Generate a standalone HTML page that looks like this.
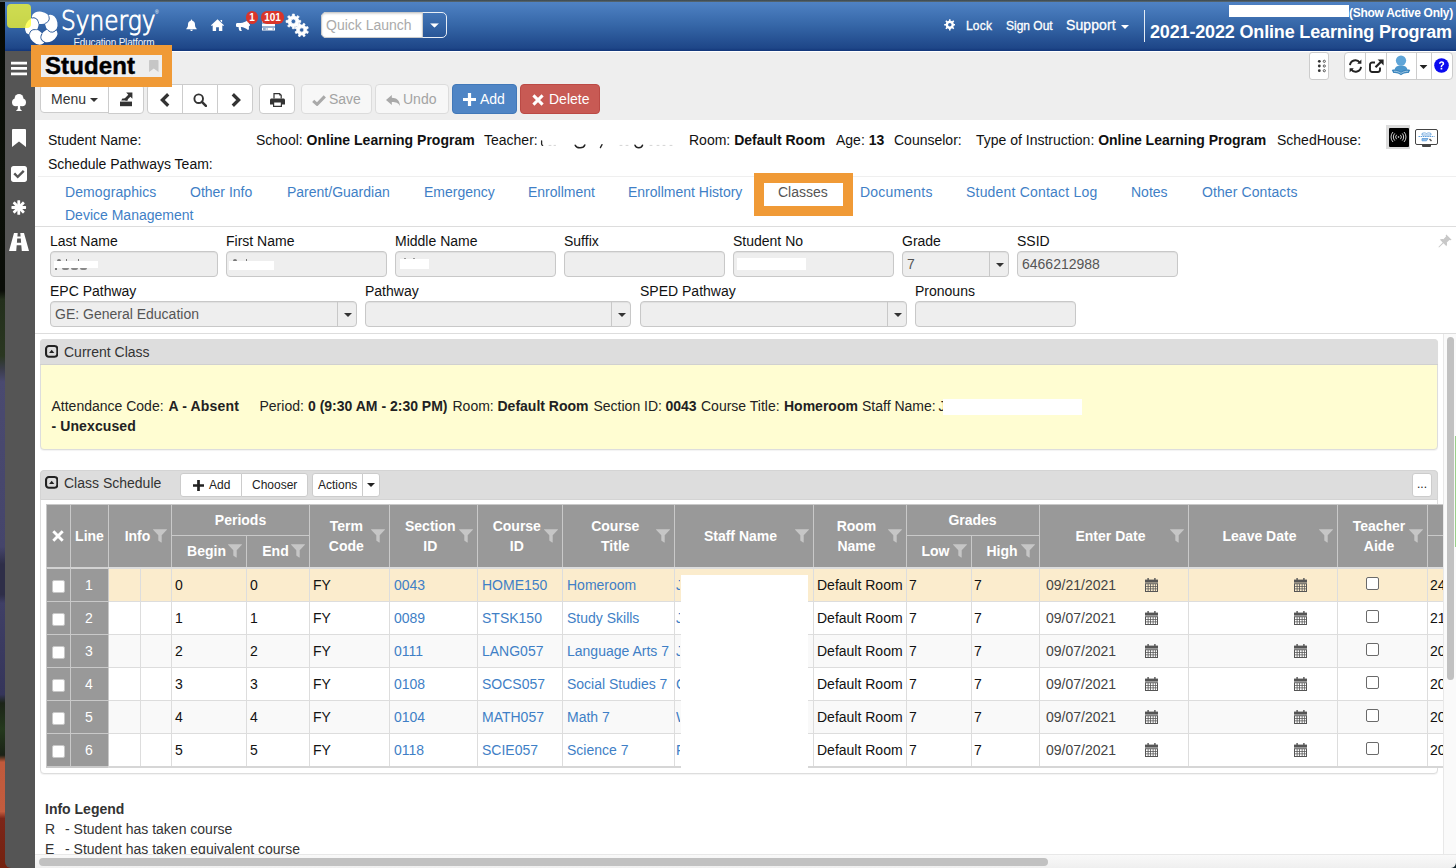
<!DOCTYPE html>
<html lang="en">
<head>
<meta charset="utf-8">
<title>Student</title>
<style>
*{box-sizing:border-box}
html,body{margin:0;padding:0}
body{width:1456px;height:868px;overflow:hidden;position:relative;background:#fff;color:#111;font:14px/20px "Liberation Sans",Arial,sans-serif}
.a{position:absolute}
.t{position:absolute;white-space:nowrap;line-height:20px}
b{font-weight:bold}
svg{display:block}
.ic{position:absolute}
/* desktop strip + chrome */
#strip{left:0;top:0;width:12px;height:868px;background:linear-gradient(180deg,#060905 0,#0b1008 20%,#0a0d08 33.500%,#232f1c 34.500%,#2a3721 41%,#3a3c4a 42.500%,#4a4a70 44%,#45456b 63%,#2e2e48 65%,#2e2e48 68.500%,#3f3f66 69.500%,#35355a 80%,#1c2418 81%,#24391d 84%,#1a2216 87%,#c05a3c 87.800%,#c25c3e 93.500%,#7c2619 94.300%,#74220f 100%)}
#topline{left:0;top:0;width:1456px;height:2px;background:linear-gradient(180deg,#39454b,#5a6a74)}
#hdr{left:5px;top:2px;width:1451px;height:49px;background:linear-gradient(180deg,#4f82c4 0,#3566a7 48%,#1e4688 94%,#12367a 100%)}
#side{left:5px;top:51px;width:30px;height:817px;background:#555;border-bottom-left-radius:6px}
#tool{left:35px;top:51px;width:1421px;height:69px;background:#eee;border-top:1px solid #fff}
/* header text */
.hw{color:#fff}
.lk{color:#3f7fc6}
.in{position:absolute;height:26px;background:#eee;border:1px solid #c8c8c8;border-radius:4px;color:#555;box-shadow:inset 0 1px 1px rgba(0,0,0,.06)}
.in span{position:absolute;left:4px;top:2px;line-height:20px;white-space:nowrap}
.in i{position:absolute;right:18px;top:0;width:1px;height:24px;background:#c8c8c8}
.th{color:#fff;font-weight:bold;text-align:center}
.dt{color:#444}
.cb{width:13px;height:13px;background:#fff;border:1px solid #6a6a6a;border-radius:2px}
/* buttons */
.btn{position:absolute;top:84px;height:30px;background:#fff;border:1px solid #ccc;border-radius:4px;font-size:14px;line-height:28px;color:#333;white-space:nowrap}
.btn .ic{margin-top:2px}
.btn.dis{color:#a3a3a3;background:#f7f7f7;border-color:#dcdcdc}
.btn.pri{background:#4f85c5;border-color:#4178b8;color:#fff}
.btn.dan{background:#c85a54;border-color:#bb4a45;color:#fff}
.sb{position:absolute;top:52px;height:28px;background:#fff;border:1px solid #ccc}
</style>
</head>
<body>
<!-- SVG icon symbols -->
<svg width="0" height="0" style="position:absolute">
<defs>
<symbol id="i-caret" viewBox="0 0 8 4"><path d="M0 0h8L4 4z"/></symbol>
</defs>
</svg>

<div id="strip" class="a"></div>
<div id="hdr" class="a"></div>
<div id="topline" class="a"></div>
<div id="side" class="a"></div>
<div id="tool" class="a"></div>

<!-- logo -->
<svg class="ic" style="left:23px;top:9px" width="38" height="38" viewBox="-19 -19 38 38">
<defs><clipPath id="lc0"><ellipse cx="0" cy="-10.300" rx="8.800" ry="6.200" transform="rotate(64) rotate(16 0 -10.300)"/></clipPath><clipPath id="lc1"><ellipse cx="0" cy="-10.300" rx="8.800" ry="6.200" transform="rotate(136) rotate(16 0 -10.300)"/></clipPath><clipPath id="lc2"><ellipse cx="0" cy="-10.300" rx="8.800" ry="6.200" transform="rotate(208) rotate(16 0 -10.300)"/></clipPath><clipPath id="lc3"><ellipse cx="0" cy="-10.300" rx="8.800" ry="6.200" transform="rotate(280) rotate(16 0 -10.300)"/></clipPath><clipPath id="lc4"><ellipse cx="0" cy="-10.300" rx="8.800" ry="6.200" transform="rotate(-8) rotate(16 0 -10.300)"/></clipPath></defs>
<g fill="#fff"><ellipse cx="0" cy="-10.300" rx="8.800" ry="6.200" transform="rotate(-8) rotate(16 0 -10.300)"/><ellipse cx="0" cy="-10.300" rx="8.800" ry="6.200" transform="rotate(64) rotate(16 0 -10.300)"/><ellipse cx="0" cy="-10.300" rx="8.800" ry="6.200" transform="rotate(136) rotate(16 0 -10.300)"/><ellipse cx="0" cy="-10.300" rx="8.800" ry="6.200" transform="rotate(208) rotate(16 0 -10.300)"/><ellipse cx="0" cy="-10.300" rx="8.800" ry="6.200" transform="rotate(280) rotate(16 0 -10.300)"/></g>
<g fill="none" stroke="#2f5c9c" stroke-width="0.9"><g clip-path="url(#lc0)"><ellipse cx="0" cy="-10.300" rx="8.800" ry="6.200" transform="rotate(-8) rotate(16 0 -10.300)"/></g><g clip-path="url(#lc1)"><ellipse cx="0" cy="-10.300" rx="8.800" ry="6.200" transform="rotate(64) rotate(16 0 -10.300)"/></g><g clip-path="url(#lc2)"><ellipse cx="0" cy="-10.300" rx="8.800" ry="6.200" transform="rotate(136) rotate(16 0 -10.300)"/></g><g clip-path="url(#lc3)"><ellipse cx="0" cy="-10.300" rx="8.800" ry="6.200" transform="rotate(208) rotate(16 0 -10.300)"/></g><g clip-path="url(#lc4)"><ellipse cx="0" cy="-10.300" rx="8.800" ry="6.200" transform="rotate(280) rotate(16 0 -10.300)"/></g></g>
</svg>
<div class="t hw" style="left:61px;top:4px;font-family:'DejaVu Sans Light','DejaVu Sans',sans-serif;font-weight:200;font-size:26px;line-height:34px;transform:scaleX(.895);transform-origin:0 0;-webkit-text-stroke:0.9px #fff">Synergy</div>
<div class="t hw" style="left:155px;top:9px;font-size:5px;line-height:6px">®</div>
<div class="t hw" style="left:73.400px;top:37.400px;font-size:10px;line-height:12px;letter-spacing:-0.2px;opacity:.92">Education Platform</div>
<div class="a" style="left:7px;top:4px;width:24px;height:24px;border-radius:4px;background:rgba(255,255,40,.73)"></div>

<!-- header icons -->
<svg class="ic" style="left:185.500px;top:18.500px" width="11" height="12.500" viewBox="0 0 12 13" fill="#fff"><path d="M6 0.3c.5 0 .8.3.8.8v.5c1.900.400 3 1.900 3 3.800 0 2.800.7 3.900 1.900 4.900v.6H.3v-.6c1.200-1 1.900-2.100 1.900-4.900 0-1.900 1.100-3.400 3-3.800V1.100c0-.5.300-.8.800-.8zM4.600 11.400h2.800c0 .8-.6 1.400-1.400 1.400s-1.400-.6-1.400-1.400z"/></svg>
<svg class="ic" style="left:211px;top:19px" width="13" height="12" viewBox="0 0 13 12" fill="#fff"><path d="M6.500.300 13 6.200l-.8.900-.9-.8V12H7.900V8.200H5.100V12H1.700V6.300l-.9.800L0 6.200zM9.500.900h1.600v2.600L9.500 2.100z"/></svg>
<svg class="ic" style="left:236px;top:20px" width="14" height="11" viewBox="0 0 14 11" fill="#fff"><path d="M12 0c.5 0 .9.400.9.900v2.900c.6.100 1.100.600 1.100 1.200s-.5 1.100-1.100 1.200v2.900c0 .5-.4.900-.9.900C9.800 8.300 7.600 7.300 5.200 7.100c-.5.400-.5.900 0 1.400-.4.700 0 1.300.7 1.900-.4.700-1.900.8-2.600.2-.3-1.300-.9-2.300-.6-3.500H1.400C.6 7.100 0 6.500 0 5.700V4.300c0-.8.600-1.400 1.400-1.400h3.100C7.300 2.800 9.800 1.700 12 0z"/></svg>
<svg class="ic" style="left:262px;top:19px" width="13" height="12" viewBox="0 0 13 12" fill="#fff"><path d="M0 .5h13v2.900H0zM0 4.500h13v2.900H0zM0 8.600h13v2.900H0z"/><path fill="#2c5a9a" d="M1 9.600h2.800v.9H1zM4.600 9.600h1v.9h-1zM10.600 9.500h1.200v1.100h-1.200z"/></svg>
<!-- badges -->
<div class="a" style="left:246px;top:11px;width:12px;height:13px;border-radius:6px;background:#d9352a;color:#fff;font-weight:bold;font-size:10px;line-height:13px;text-align:center">1</div>
<div class="a" style="left:261px;top:11px;width:23px;height:13px;border-radius:6px;background:#d9352a;color:#fff;font-weight:bold;font-size:10px;line-height:13px;text-align:center">101</div>
<!-- cogs -->
<svg class="ic" style="left:285px;top:13px" width="25" height="25" viewBox="0 0 25 25">
<g fill="#fff" stroke="#fff" stroke-width=".7" stroke-linejoin="round">
<g transform="translate(8.400 8.400)"><path id="cg" d="M-1.08 -5.39 L-0.99 -7.33 L0.99 -7.33 L1.07 -5.39 L3.05 -4.58 L4.49 -5.88 L5.88 -4.49 L4.57 -3.06 L5.39 -1.08 L7.33 -0.99 L7.33 0.99 L5.39 1.07 L4.58 3.05 L5.88 4.49 L4.49 5.88 L3.06 4.57 L1.08 5.39 L0.99 7.33 L-0.99 7.33 L-1.07 5.39 L-3.05 4.58 L-4.49 5.88 L-5.88 4.49 L-4.57 3.06 L-5.39 1.08 L-7.33 0.99 L-7.33 -0.99 L-5.39 -1.07 L-4.58 -3.05 L-5.88 -4.49 L-4.49 -5.88 L-3.06 -4.57zM0 -2.3a2.3 2.3 0 1 0 0 4.6a2.3 2.3 0 1 0 0 -4.6z" fill-rule="evenodd"/></g>
<g transform="translate(16.700 17) scale(.93) rotate(22)"><use href="#cg"/></g>
</g>
</svg>
<!-- quick launch -->
<div class="a" style="left:321px;top:12px;width:126px;height:26px;border:1px solid #e8eef6;border-radius:5px"></div>
<div class="a" style="left:321px;top:12px;width:102px;height:26px;background:#fff;border:1px solid #ccc;border-radius:5px 0 0 5px;box-shadow:inset 0 1px 2px rgba(0,0,0,.15)"></div>
<div class="t" style="left:326px;top:15px;color:#aaa">Quick Launch</div>
<svg class="ic" style="left:430px;top:23px" width="9" height="5" viewBox="0 0 8 4" fill="#fff"><use href="#i-caret"/></svg>

<!-- header right -->
<svg class="ic" style="left:943.500px;top:19.300px" width="11.600" height="11.600" viewBox="-7.600 -7.600 15.200 15.200" fill="#fff"><use href="#cg"/></svg>
<div class="t hw" style="left:966px;top:16px;font-size:12px;letter-spacing:.2px;-webkit-text-stroke:.3px #fff">Lock</div>
<div class="t hw" style="left:1006px;top:16px;font-size:12px;-webkit-text-stroke:.3px #fff">Sign Out</div>
<div class="t hw" style="left:1066px;top:15px;font-size:14px;letter-spacing:.1px;-webkit-text-stroke:.3px #fff">Support</div>
<svg class="ic" style="left:1121px;top:25px" width="8" height="4" viewBox="0 0 8 4" fill="#fff"><use href="#i-caret"/></svg>
<div class="a" style="left:1144px;top:10px;width:1px;height:32px;background:#e4ebf5"></div>
<div class="a" style="left:1229px;top:5px;width:120px;height:12px;background:#fff"></div>
<div class="t hw" style="left:1349px;top:3px;font-size:12px;font-weight:bold;letter-spacing:-0.28px">(Show Active Only)</div>
<div class="t hw" style="left:1150px;top:22px;font-size:18px;font-weight:bold;letter-spacing:-0.16px">2021-2022 Online Learning Program</div>

<!-- sidebar icons -->
<svg class="ic" style="left:11px;top:61px" width="16" height="15" viewBox="0 0 16 15" fill="#fff"><path d="M0 .8h16v2.700H0zM0 6.100h16v2.700H0zM0 11.500h16v2.700H0z"/></svg>
<svg class="ic" style="left:12px;top:93.500px" width="14" height="17.500" viewBox="0 0 14 17.500" fill="#fff"><circle cx="7" cy="4.400" r="4.400"/><circle cx="3.900" cy="8.300" r="3.900"/><circle cx="10.100" cy="8.300" r="3.900"/><circle cx="7" cy="8.500" r="3.500"/><path d="M5.800 11h2.400v3.600c0 .9.600 1.500 1.500 1.700v1.200H4.300v-1.200c.9-.2 1.500-.8 1.500-1.700z"/></svg>
<svg class="ic" style="left:12px;top:129px" width="14" height="18" viewBox="0 0 14 18" fill="#fff"><path d="M1.200 0h11.600c.7 0 1.200.5 1.200 1.200V18L7 12.400 0 18V1.200C0 .5.500 0 1.200 0z"/></svg>
<svg class="ic" style="left:11px;top:166px" width="16" height="16" viewBox="0 0 16 16" fill="#fff"><path fill-rule="evenodd" d="M2.500 0h11C14.900 0 16 1.100 16 2.500v11c0 1.400-1.100 2.500-2.500 2.500h-11C1.100 16 0 14.900 0 13.500v-11C0 1.100 1.100 0 2.500 0zM6.700 12.600l6.900-6.900-1.700-1.700-5.200 5.200-2.600-2.600-1.700 1.700z"/></svg>
<svg class="ic" style="left:11px;top:200px" width="15.500" height="15" viewBox="-8 -8 16 16" fill="#fff"><g id="ast"><rect x="-1.500" y="-7.800" width="3" height="15.600" rx=".6"/></g><use href="#ast" transform="rotate(45)"/><use href="#ast" transform="rotate(90)"/><use href="#ast" transform="rotate(135)"/></svg>
<svg class="ic" style="left:9px;top:233px" width="20" height="18" viewBox="0 0 20 18" fill="#fff"><path fill-rule="evenodd" d="M5 0h3.700l-.3 3.500h3.200L11.300 0H15l5 18h-7.200l-.5-5.800H7.700L7.200 18H0zM8.200 5.500 7.900 9.800h4.200l-.3-4.300z"/></svg>

<!-- title -->
<div class="t" style="left:45px;top:50px;font-size:24px;line-height:32px;font-weight:bold;color:#000;letter-spacing:.1px;-webkit-text-stroke:.45px #000">Student</div>
<svg class="ic" style="left:149.200px;top:60px" width="9.600" height="12" viewBox="0 0 11 14" fill="#c6c6c6"><path d="M.8 0h9.400c.5 0 .8.300.8.800V14L5.500 9.800 0 14V.8C0 .3.300 0 .8 0z"/></svg>
<!-- right small buttons -->
<div class="sb" style="left:1309px;width:20px;border-radius:3px"></div>
<svg class="ic" style="left:1316.500px;top:58.600px" width="10" height="14" viewBox="0 0 10 14"><g fill="#333"><circle cx="2.300" cy="2.300" r="1.400"/><circle cx="2.300" cy="7" r="1.400"/><circle cx="2.300" cy="11.700" r="1.400"/></g><g fill="none" stroke="#333" stroke-width=".8"><circle cx="7.300" cy="2.300" r="1.100"/><circle cx="7.300" cy="7" r="1.100"/><circle cx="7.300" cy="11.700" r="1.100"/></g></svg>
<div class="sb" style="left:1344px;width:109px;border-radius:4px"></div>
<div class="a" style="left:1365px;top:53px;width:1px;height:26px;background:#ccc"></div>
<div class="a" style="left:1386px;top:53px;width:1px;height:26px;background:#ccc"></div>
<div class="a" style="left:1415.5px;top:53px;width:1px;height:26px;background:#ccc"></div>
<div class="a" style="left:1431px;top:53px;width:1px;height:26px;background:#ccc"></div>
<svg class="ic" style="left:1348px;top:59px" width="15" height="14" viewBox="0 0 15 14" fill="none" stroke="#222" stroke-width="1.900"><path d="M2 6.200A5.400 5.400 0 0 1 11.800 3.600"/><path d="M13 7.800A5.400 5.400 0 0 1 3.200 10.400"/><path d="M13.400.6v4.200H9.200z" fill="#222" stroke="none"/><path d="M1.600 13.400V9.200h4.200z" fill="#222" stroke="none"/></svg>
<svg class="ic" style="left:1369px;top:59px" width="15" height="14" viewBox="0 0 15 14" fill="none" stroke="#222" stroke-width="1.900"><path d="M11 8.500v2.300c0 1.200-1 2.200-2.200 2.200H3.200C2 13 1 12 1 10.800V5.700c0-1.200 1-2.200 2.200-2.200H6"/><path d="M6.500 8.300 12.300 2.500" stroke-width="2.200"/><path d="M8.600.4h6v6z" fill="#222" stroke="none"/></svg>
<svg class="ic" style="left:1391px;top:54.300px" width="20" height="23" viewBox="0 0 21 23"><circle cx="10.500" cy="6.300" r="5.400" fill="#5fa5d8"/><path d="M3.600 16c.5-3 3-4.600 6.900-4.600s6.400 1.600 6.900 4.600l-6.900 2.600z" fill="#4d97cd"/><path d="M.8 16.200c3.400-.9 6.500-.2 9.700 1.900 3.200-2.100 6.300-2.800 9.700-1.900l-1.600 3.300c-2.800-.5-5.400.2-8.100 2.200-2.700-2-5.300-2.700-8.100-2.200z" fill="#3d87be"/><path d="M3.200 17.600c2.500-.2 4.800.5 7.300 2.100 2.500-1.600 4.800-2.300 7.300-2.100" fill="none" stroke="#cfe4f4" stroke-width=".7"/></svg>
<svg class="ic" style="left:1419px;top:65px" width="9" height="4" viewBox="0 0 8 4" fill="#222"><use href="#i-caret"/></svg>
<svg class="ic" style="left:1434px;top:58px" width="15" height="15" viewBox="0 0 15 15"><circle cx="7.500" cy="7.500" r="7.300" fill="#0a0af0"/><path d="M5 5.700c.1-1.500 1.100-2.400 2.600-2.400 1.500 0 2.600.9 2.600 2.200 0 1-.5 1.500-1.300 2-.6.400-.8.700-.8 1.400H6.700c0-1.100.3-1.600 1.100-2.100.6-.4.800-.7.800-1.200 0-.5-.4-.9-1-.9-.7 0-1.100.4-1.100 1zM6.600 9.700h1.700v1.700H6.600z" fill="#fff"/></svg>

<!-- toolbar buttons -->
<div class="btn" style="left:40px;width:69px;height:29px;border-radius:4px 0 0 4px"><span class="a" style="left:10px;top:0">Menu</span><svg class="ic" style="left:49px;top:11px" width="8" height="4" viewBox="0 0 8 4" fill="#333"><use href="#i-caret"/></svg></div>
<div class="btn" style="left:108px;width:36px;border-radius:0 4px 4px 0"><svg class="ic" style="left:10px;top:5px" width="14" height="15" viewBox="0 0 14 15" fill="#333"><path d="M1 9.600h12v4.600H1z"/><path d="M2.200 8.400h7L8 6.600H3.400z"/><path d="M7.200.6h6.200v6.200l-2-2-4.300 4.200-2-2 4.200-4.200z"/></svg></div>
<div class="btn" style="left:147px;width:36px;border-radius:4px 0 0 4px"><svg class="ic" style="left:12px;top:6px" width="10" height="14" viewBox="0 0 10 14" fill="none" stroke="#333" stroke-width="3.300"><path d="M8.200 1.300 2.400 7l5.800 5.700"/></svg></div>
<div class="btn" style="left:182px;width:36px;border-radius:0"><svg class="ic" style="left:10px;top:6px" width="14" height="14" viewBox="0 0 14 14" fill="none" stroke="#333"><circle cx="5.700" cy="5.700" r="4.300" stroke-width="1.900"/><path d="M8.900 8.900l4 4" stroke-width="2.500" stroke-linecap="round"/></svg></div>
<div class="btn" style="left:217px;width:36px;border-radius:0 4px 4px 0"><svg class="ic" style="left:13px;top:6px" width="10" height="14" viewBox="0 0 10 14" fill="none" stroke="#333" stroke-width="3.300"><path d="M1.800 1.300 7.600 7l-5.800 5.700"/></svg></div>
<div class="btn" style="left:259px;width:36px"><svg class="ic" style="left:10px;top:6px" width="15" height="14" viewBox="0 0 15 14" fill="#333"><path d="M3.400 0h6.400l2 2v3.400H3.400zM4.600 1.200v4.200h6V2.600H9.200V1.200z" fill-rule="evenodd"/><path fill-rule="evenodd" d="M1.600 5.400h11.800c.9 0 1.600.7 1.600 1.600v4.400h-3V14H3V11.400H0V7c0-.9.700-1.600 1.600-1.600zM4.200 9.600v3.200h6.600V9.600z"/></svg></div>
<div class="btn dis" style="left:301px;width:71px"><svg class="ic" style="left:10px;top:8px" width="14" height="11" viewBox="0 0 14 11" fill="none" stroke="#a9a9a9" stroke-width="3.100"><path d="M1.200 5.800l3.900 3.500L12.800 1.400"/></svg><span class="a" style="left:27px;top:0">Save</span></div>
<div class="btn dis" style="left:375px;width:74px"><svg class="ic" style="left:10px;top:8px" width="14" height="11" viewBox="0 0 14 11" fill="#a9a9a9"><path d="M5.800 0v2.800c4.600.1 8 2.200 8.200 8.200-1.500-2.900-3.800-3.900-8.200-3.900v2.900L0 5z"/></svg><span class="a" style="left:27px;top:0">Undo</span></div>
<div class="btn pri" style="left:452px;width:65px"><svg class="ic" style="left:10px;top:6px" width="13" height="13" viewBox="0 0 13 13" fill="#fff"><path d="M4.900 0h3.200v4.900H13v3.200H8.100V13H4.900V8.100H0V4.900h4.900z"/></svg><span class="a" style="left:27px;top:0">Add</span></div>
<div class="btn dan" style="left:520px;width:80px"><svg class="ic" style="left:11px;top:7px" width="12" height="12" viewBox="0 0 12 12" fill="none" stroke="#fff" stroke-width="3"><path d="M1.400 1.400l9.200 9.200M10.600 1.400 1.400 10.600"/></svg><span class="a" style="left:28px;top:0">Delete</span></div>

<!-- student info -->
<div class="t" style="left:48px;top:130px">Student Name:</div>
<div class="t" style="left:256px;top:130px">School: <b>Online Learning Program</b></div>
<div class="t" style="left:484px;top:130px">Teacher:</div>
<div class="t" style="left:689px;top:130px">Room: <b>Default Room</b></div>
<div class="t" style="left:836px;top:130px">Age: <b>13</b></div>
<div class="t" style="left:894px;top:130px">Counselor:</div>
<div class="t" style="left:976px;top:130px">Type of Instruction: <b>Online Learning Program</b></div>
<div class="t" style="left:1277px;top:130px">SchedHouse:</div>
<div class="t" style="left:48px;top:154px">Schedule Pathways Team:</div>
<!-- redacted teacher remnants -->
<svg class="ic" style="left:538px;top:138px" width="140" height="12" viewBox="0 0 140 12" fill="none" stroke="#222" stroke-width="1.500" stroke-linecap="round">
<path d="M3.600 2.800v3.200c0 .8.400 1.200 1 1.300" stroke-width="1.300"/>
<path d="M37.200 7.200c.8 2 2.600 2.700 5 2.600 2.400-.1 4-1 4.600-2.800" />
<path d="M64 6.600l-1.600 3" stroke-width="1.300"/>
<path d="M97 7.200c.6 1.800 2 2.500 3.800 2.500s3.200-.8 3.700-2.500"/>
<g stroke="#d4d4d4" stroke-width="1"><path d="M11 7.400h2M16 7.400h1.500M82 7.400h2M88 7.400h2M112 7.400h2M119 7.400h2M125 7.400h2M132 7.400h2"/></g>
</svg>
<!-- info icons -->
<div class="a" style="left:1386px;top:125px;width:24px;height:24px;background:#dcdcdc"></div>
<div class="a" style="left:1389px;top:127.500px;width:19.500px;height:19.500px;background:#000;border-radius:1px"></div>
<svg class="ic" style="left:1390px;top:131px" width="17" height="12" viewBox="0 0 17 12" fill="none" stroke="#e8e8e8" stroke-width=".9"><circle cx="8.500" cy="6" r=".8" fill="#fff" stroke="none"/><path d="M6.600 3.800a3.200 3.200 0 0 0 0 4.400M10.400 3.800a3.200 3.200 0 0 1 0 4.400M4.800 2.400a5.200 5.200 0 0 0 0 7.200M12.200 2.400a5.200 5.200 0 0 1 0 7.200M3 1a7.300 7.300 0 0 0 0 10M14 1a7.300 7.300 0 0 1 0 10"/></svg>
<div class="a" style="left:1415px;top:128.500px;width:23px;height:16px;background:#fff;border:1.500px solid #444;border-radius:2px"></div>
<div class="a" style="left:1422px;top:145px;width:9px;height:2px;background:#444;border-radius:0 0 1px 1px"></div>
<svg class="ic" style="left:1417px;top:130.500px" width="19" height="12" viewBox="0 0 19 12" fill="none" stroke="#5b9bd8" stroke-width="1"><path d="M1.500 5.500h16" stroke-dasharray="1.500 .7"/><path d="M5 2.500c1.500-.8 3-.8 4.500 0 1.500-.8 3-.8 4.500 0v1.500H5z" stroke-width=".8"/><path d="M5 7.500h6l-1.500 2.300H5z" stroke-width=".8" fill="#8fbbe6"/><path d="M12.500 8l2 2" stroke="#555" stroke-width="1.400"/></svg>
<!-- tabs -->
<div class="a" style="left:38px;top:176px;width:1418px;height:1px;background:#efefef"></div>
<div class="a" style="left:35px;top:226px;width:1421px;height:1px;background:#ddd"></div>
<div class="t lk" style="left:65px;top:182px;letter-spacing:0.1px">Demographics</div>
<div class="t lk" style="left:190px;top:182px">Other Info</div>
<div class="t lk" style="left:287px;top:182px">Parent/Guardian</div>
<div class="t lk" style="left:424px;top:182px">Emergency</div>
<div class="t lk" style="left:528px;top:182px">Enrollment</div>
<div class="t lk" style="left:628px;top:182px">Enrollment History</div>
<div class="t" style="left:778px;top:182px;color:#555">Classes</div>
<div class="t lk" style="left:860px;top:182px;letter-spacing:0.2px">Documents</div>
<div class="t lk" style="left:966px;top:182px;letter-spacing:0.2px">Student Contact Log</div>
<div class="t lk" style="left:1131px;top:182px">Notes</div>
<div class="t lk" style="left:1202px;top:182px;letter-spacing:0.1px">Other Contacts</div>
<div class="t lk" style="left:65px;top:205px">Device Management</div>

<!-- form -->
<div class="t" style="left:50px;top:231px">Last Name</div>
<div class="in" style="left:50px;top:251px;width:168px"></div>
<div class="t" style="left:226px;top:231px">First Name</div>
<div class="in" style="left:226px;top:251px;width:161px"></div>
<div class="t" style="left:395px;top:231px">Middle Name</div>
<div class="in" style="left:395px;top:251px;width:161px"></div>
<div class="t" style="left:564px;top:231px">Suffix</div>
<div class="in" style="left:564px;top:251px;width:161px"></div>
<div class="t" style="left:733px;top:231px">Student No</div>
<div class="in" style="left:733px;top:251px;width:161px"></div>
<div class="t" style="left:902px;top:231px">Grade</div>
<div class="in" style="left:902px;top:251px;width:107px"><span>7</span><i></i><svg class="ic" style="right:4.500px;top:10.500px" width="8" height="4" viewBox="0 0 8 4" fill="#333"><use href="#i-caret"/></svg></div>
<div class="t" style="left:1017px;top:231px">SSID</div>
<div class="in" style="left:1017px;top:251px;width:161px"><span>6466212988</span></div>
<div class="t" style="left:50px;top:281px">EPC Pathway</div>
<div class="in" style="left:50px;top:301px;width:307px"><span>GE: General Education</span><i></i><svg class="ic" style="right:4.500px;top:10.500px" width="8" height="4" viewBox="0 0 8 4" fill="#333"><use href="#i-caret"/></svg></div>
<div class="t" style="left:365px;top:281px">Pathway</div>
<div class="in" style="left:365px;top:301px;width:266px"><i></i><svg class="ic" style="right:4.500px;top:10.500px" width="8" height="4" viewBox="0 0 8 4" fill="#333"><use href="#i-caret"/></svg></div>
<div class="t" style="left:640px;top:281px">SPED Pathway</div>
<div class="in" style="left:640px;top:301px;width:267px"><i></i><svg class="ic" style="right:4.500px;top:10.500px" width="8" height="4" viewBox="0 0 8 4" fill="#333"><use href="#i-caret"/></svg></div>
<div class="t" style="left:915px;top:281px">Pronouns</div>
<div class="in" style="left:915px;top:301px;width:161px"></div>
<div class="a" style="left:54px;top:261px;width:44px;height:7px;background:#fff"></div>
<div class="a" style="left:229px;top:261px;width:45px;height:9px;background:#fff"></div>
<div class="a" style="left:400px;top:259px;width:29px;height:10px;background:#fff"></div>
<div class="a" style="left:737px;top:258px;width:69px;height:12px;background:#fff"></div>
<div class="a" style="left:57px;top:259px;width:4px;height:2px;background:#777;border-radius:2px 2px 0 0"></div>
<div class="a" style="left:65.500px;top:258.500px;width:1.500px;height:2.500px;background:#777"></div>
<div class="a" style="left:77.500px;top:258.500px;width:1.500px;height:2.500px;background:#777"></div>
<div class="a" style="left:55px;top:268px;width:1.500px;height:1.500px;background:#777"></div>
<div class="a" style="left:62px;top:268px;width:7px;height:1.500px;background:#888;border-radius:0 0 2px 2px"></div>
<div class="a" style="left:71px;top:268px;width:7px;height:1.500px;background:#888;border-radius:0 0 2px 2px"></div>
<div class="a" style="left:80px;top:268px;width:7px;height:1.500px;background:#888;border-radius:0 0 2px 2px"></div>
<div class="a" style="left:232.500px;top:259px;width:4px;height:2px;background:#777;border-radius:2px 2px 0 0"></div>
<div class="a" style="left:245.500px;top:258.500px;width:1.500px;height:2.500px;background:#777"></div>
<div class="a" style="left:404px;top:257.500px;width:1.500px;height:1.500px;background:#999"></div>
<div class="a" style="left:413px;top:257.500px;width:1.500px;height:1.500px;background:#999"></div>
<svg class="ic" style="left:1438px;top:234px" width="14" height="14" viewBox="0 0 14 14" fill="#c8c8c8"><path d="M8.300.4 13.600 5.700l-1.200.6-1-.3-2.600 2.600c.5 1.400.3 2.600-.4 3.600L5.500 9.300 1 13.600l-.6-.6L4.700 8.500 1.800 5.600c1-.7 2.200-.9 3.600-.4L8 2.600l-.3-1z"/></svg>
<div class="a" style="left:35px;top:333px;width:1421px;height:1px;background:#ddd"></div>

<!--CUR0--><!-- current class -->
<div class="a" style="left:40px;top:339px;width:1398px;height:111px;border:1px solid #ddd;border-radius:4px;background:#fffdd2;box-shadow:0 1px 1px rgba(0,0,0,.05)"></div>
<div class="a" style="left:40px;top:339px;width:1398px;height:26px;background:#ddd;border-radius:4px 4px 0 0;border-bottom:1px solid #d0d0d0"></div>
<svg class="ic" style="left:45.1px;top:345.1px" width="13.400" height="12.800" viewBox="0 0 13.400 12.800"><rect x="1.050" y="1.050" width="11.300" height="10.700" rx="2.800" fill="none" stroke="#222" stroke-width="2.100"/><path d="M4.100 7.900h5.200L6.700 4.800z" fill="#222"/></svg>
<div class="t" style="left:64px;top:341.500px;color:#333">Current Class</div>
<div class="t" style="left:51.500px;top:396px;color:#222">Attendance Code: <b style="letter-spacing:.15px;margin-left:1px">A - Absent</b></div>
<div class="t" style="left:51.500px;top:416px;color:#222"><b style="letter-spacing:.1px">- Unexcused</b></div>
<div class="t" style="left:259.5px;top:396px;color:#222">Period:</div>
<div class="t" style="left:308px;top:396px;color:#222"><b>0 (9:30 AM - 2:30 PM)</b></div>
<div class="t" style="left:452.5px;top:396px;color:#222">Room:</div>
<div class="t" style="left:497.5px;top:396px;color:#222"><b>Default Room</b></div>
<div class="t" style="left:593.5px;top:396px;color:#222">Section ID:</div>
<div class="t" style="left:665.5px;top:396px;color:#222"><b>0043</b></div>
<div class="t" style="left:701px;top:396px;color:#222">Course Title:</div>
<div class="t" style="left:784px;top:396px;color:#222"><b>Homeroom</b></div>
<div class="t" style="left:862px;top:396px;color:#222">Staff Name:</div>
<div class="t" style="left:938.5px;top:396px;color:#222">J</div>
<div class="a" style="left:943px;top:399px;width:139px;height:16px;background:#fff"></div>
<!-- class schedule -->
<div class="a" style="left:40px;top:470px;width:1398px;height:304px;border:1px solid #ddd;border-radius:4px;background:#fff;box-shadow:0 1px 1px rgba(0,0,0,.05)"></div>
<div class="a" style="left:40px;top:470px;width:1398px;height:30px;background:#ddd;border-radius:4px 4px 0 0;border:1px solid #d4d4d4"></div>
<svg class="ic" style="left:45.1px;top:476.3px" width="13.400" height="12.800" viewBox="0 0 13.400 12.800"><rect x="1.050" y="1.050" width="11.300" height="10.700" rx="2.800" fill="none" stroke="#222" stroke-width="2.100"/><path d="M4.100 7.900h5.200L6.700 4.800z" fill="#222"/></svg>
<div class="t" style="left:64px;top:473px;color:#333">Class Schedule</div>
<div class="a" style="left:180px;top:473px;width:62px;height:24px;background:#fff;border:1px solid #ccc;border-radius:3px 0 0 3px;font-size:12px;line-height:22px;color:#222;white-space:nowrap"><svg class="ic" style="left:12px;top:6px" width="11" height="11" viewBox="0 0 13 13" fill="#222"><path d="M4.900 0h3.200v4.900H13v3.200H8.100V13H4.900V8.100H0V4.900h4.900z"/></svg><span class="a" style="left:28px;top:0">Add</span></div>
<div class="a" style="left:241px;top:473px;width:67px;height:24px;background:#fff;border:1px solid #ccc;border-radius:0 3px 3px 0;font-size:12px;line-height:22px;color:#222;white-space:nowrap"><span class="a" style="left:10px;top:0">Chooser</span></div>
<div class="a" style="left:312px;top:473px;width:51px;height:24px;background:#fff;border:1px solid #ccc;border-radius:3px 0 0 3px;font-size:12px;line-height:22px;color:#222;white-space:nowrap"><span class="a" style="left:5px;top:0">Actions</span></div>
<div class="a" style="left:362px;top:473px;width:18px;height:24px;background:#fff;border:1px solid #ccc;border-radius:0 3px 3px 0;font-size:12px;line-height:22px;color:#222;white-space:nowrap"><svg class="ic" style="left:4px;top:9px" width="8" height="4" viewBox="0 0 8 4" fill="#222"><use href="#i-caret"/></svg></div>
<div class="a" style="left:1412px;top:473px;width:20px;height:24px;background:#fff;border:1px solid #ccc;border-radius:3px;font-size:12px;line-height:22px;color:#222;white-space:nowrap"><span class="a" style="left:4px;top:-1px;letter-spacing:0">...</span></div>
<div class="a" id="grid" style="left:46px;top:504px;width:1397px;height:264px;overflow:hidden">
<div class="a" style="left:0;top:0;width:1397px;height:63px;background:#999"></div>
<div class="a" style="left:0;top:65px;width:1397px;height:32px;background:#fbeccd"></div>
<div class="a" style="left:0;top:98px;width:1397px;height:32px;background:#fff"></div>
<div class="a" style="left:0;top:131px;width:1397px;height:32px;background:#f9f9f9"></div>
<div class="a" style="left:0;top:164px;width:1397px;height:32px;background:#fff"></div>
<div class="a" style="left:0;top:197px;width:1397px;height:32px;background:#f9f9f9"></div>
<div class="a" style="left:0;top:230px;width:1397px;height:32px;background:#fff"></div>
<div class="a" style="left:0;top:64px;width:62px;height:198px;background:#999"></div>
<div class="a" style="left:0;top:63px;width:1397px;height:2px;background:#ddd"></div>
<div class="a" style="left:0;top:63px;width:62px;height:2px;background:#d2d2d2"></div>
<div class="a" style="left:0;top:97px;width:1397px;height:1px;background:#ddd"></div>
<div class="a" style="left:0;top:97px;width:62px;height:1px;background:#c9c9c9"></div>
<div class="a" style="left:0;top:130px;width:1397px;height:1px;background:#ddd"></div>
<div class="a" style="left:0;top:130px;width:62px;height:1px;background:#c9c9c9"></div>
<div class="a" style="left:0;top:163px;width:1397px;height:1px;background:#ddd"></div>
<div class="a" style="left:0;top:163px;width:62px;height:1px;background:#c9c9c9"></div>
<div class="a" style="left:0;top:196px;width:1397px;height:1px;background:#ddd"></div>
<div class="a" style="left:0;top:196px;width:62px;height:1px;background:#c9c9c9"></div>
<div class="a" style="left:0;top:229px;width:1397px;height:1px;background:#ddd"></div>
<div class="a" style="left:0;top:229px;width:62px;height:1px;background:#c9c9c9"></div>
<div class="a" style="left:0;top:262px;width:1397px;height:2px;background:#d6d6d6"></div>
<div class="a" style="left:0;top:262px;width:62px;height:2px;background:#c9c9c9"></div>
<div class="a" style="left:0;top:0;width:1397px;height:1px;background:#c9c9c9"></div>
<div class="a" style="left:0px;top:0px;width:1px;height:63px;background:#c9c9c9"></div>
<div class="a" style="left:24px;top:0px;width:1px;height:63px;background:#c9c9c9"></div>
<div class="a" style="left:62px;top:0px;width:1px;height:63px;background:#c9c9c9"></div>
<div class="a" style="left:125px;top:0px;width:1px;height:63px;background:#c9c9c9"></div>
<div class="a" style="left:200px;top:32px;width:1px;height:31px;background:#c9c9c9"></div>
<div class="a" style="left:263px;top:0px;width:1px;height:63px;background:#c9c9c9"></div>
<div class="a" style="left:343px;top:0px;width:1px;height:63px;background:#c9c9c9"></div>
<div class="a" style="left:431px;top:0px;width:1px;height:63px;background:#c9c9c9"></div>
<div class="a" style="left:516px;top:0px;width:1px;height:63px;background:#c9c9c9"></div>
<div class="a" style="left:628px;top:0px;width:1px;height:63px;background:#c9c9c9"></div>
<div class="a" style="left:767px;top:0px;width:1px;height:63px;background:#c9c9c9"></div>
<div class="a" style="left:860px;top:0px;width:1px;height:63px;background:#c9c9c9"></div>
<div class="a" style="left:925px;top:32px;width:1px;height:31px;background:#c9c9c9"></div>
<div class="a" style="left:993px;top:0px;width:1px;height:63px;background:#c9c9c9"></div>
<div class="a" style="left:1142px;top:0px;width:1px;height:63px;background:#c9c9c9"></div>
<div class="a" style="left:1291px;top:0px;width:1px;height:63px;background:#c9c9c9"></div>
<div class="a" style="left:1381px;top:0px;width:1px;height:63px;background:#c9c9c9"></div>
<div class="a" style="left:125px;top:31px;width:138px;height:1px;background:#c9c9c9"></div>
<div class="a" style="left:860px;top:31px;width:133px;height:1px;background:#c9c9c9"></div>
<div class="a" style="left:1381px;top:31px;width:80px;height:1px;background:#c9c9c9"></div>
<div class="a" style="left:0px;top:64px;width:1px;height:198px;background:#c9c9c9"></div>
<div class="a" style="left:24px;top:64px;width:1px;height:198px;background:#c9c9c9"></div>
<div class="a" style="left:62px;top:64px;width:1px;height:198px;background:#c9c9c9"></div>
<div class="a" style="left:125px;top:64px;width:1px;height:198px;background:#ddd"></div>
<div class="a" style="left:200px;top:64px;width:1px;height:198px;background:#ddd"></div>
<div class="a" style="left:263px;top:64px;width:1px;height:198px;background:#ddd"></div>
<div class="a" style="left:343px;top:64px;width:1px;height:198px;background:#ddd"></div>
<div class="a" style="left:431px;top:64px;width:1px;height:198px;background:#ddd"></div>
<div class="a" style="left:516px;top:64px;width:1px;height:198px;background:#ddd"></div>
<div class="a" style="left:628px;top:64px;width:1px;height:198px;background:#ddd"></div>
<div class="a" style="left:767px;top:64px;width:1px;height:198px;background:#ddd"></div>
<div class="a" style="left:860px;top:64px;width:1px;height:198px;background:#ddd"></div>
<div class="a" style="left:925px;top:64px;width:1px;height:198px;background:#ddd"></div>
<div class="a" style="left:993px;top:64px;width:1px;height:198px;background:#ddd"></div>
<div class="a" style="left:1142px;top:64px;width:1px;height:198px;background:#ddd"></div>
<div class="a" style="left:1291px;top:64px;width:1px;height:198px;background:#ddd"></div>
<div class="a" style="left:1381px;top:64px;width:1px;height:198px;background:#ddd"></div>
<div class="a" style="left:94px;top:64px;width:1px;height:198px;background:#ddd"></div>
<div class="t th" style="left:24.5px;top:21.5px;width:38px">Line</div>
<div class="t th" style="left:67px;top:21.5px;width:49px">Info</div>
<svg class="ic" style="left:107px;top:25px" width="14" height="14" viewBox="0 0 14 14" fill="#c6c6c6"><path d="M.3.300h13.400c.3 0 .4.300.2.500L8.700 6.300v6.900c0 .3-.3.500-.6.300L5.600 11.800c-.2-.1-.3-.3-.3-.5v-5L.1.800C-.1.600 0 .3.300.3z"/></svg>
<div class="t th" style="left:125.5px;top:5.8px;width:138px">Periods</div>
<div class="t th" style="left:130px;top:37.0px;width:61px">Begin</div>
<svg class="ic" style="left:182px;top:40px" width="14" height="14" viewBox="0 0 14 14" fill="#c6c6c6"><path d="M.3.300h13.400c.3 0 .4.300.2.500L8.700 6.300v6.900c0 .3-.3.500-.6.300L5.600 11.800c-.2-.1-.3-.3-.3-.5v-5L.1.800C-.1.600 0 .3.300.3z"/></svg>
<div class="t th" style="left:205px;top:37.0px;width:49px">End</div>
<svg class="ic" style="left:245px;top:40px" width="14" height="14" viewBox="0 0 14 14" fill="#c6c6c6"><path d="M.3.300h13.400c.3 0 .4.300.2.500L8.700 6.300v6.900c0 .3-.3.500-.6.300L5.600 11.800c-.2-.1-.3-.3-.3-.5v-5L.1.800C-.1.600 0 .3.300.3z"/></svg>
<div class="t th" style="left:267.3px;top:11.5px;width:66px">Term</div>
<div class="t th" style="left:267.3px;top:31.5px;width:66px">Code</div>
<svg class="ic" style="left:325px;top:25px" width="14" height="14" viewBox="0 0 14 14" fill="#c6c6c6"><path d="M.3.300h13.400c.3 0 .4.300.2.500L8.700 6.300v6.900c0 .3-.3.500-.6.300L5.600 11.800c-.2-.1-.3-.3-.3-.5v-5L.1.800C-.1.600 0 .3.300.3z"/></svg>
<div class="t th" style="left:347.3px;top:11.5px;width:74px">Section</div>
<div class="t th" style="left:347.3px;top:31.5px;width:74px">ID</div>
<svg class="ic" style="left:413px;top:25px" width="14" height="14" viewBox="0 0 14 14" fill="#c6c6c6"><path d="M.3.300h13.400c.3 0 .4.300.2.500L8.700 6.300v6.900c0 .3-.3.500-.6.300L5.600 11.800c-.2-.1-.3-.3-.3-.5v-5L.1.800C-.1.600 0 .3.300.3z"/></svg>
<div class="t th" style="left:435.3px;top:11.5px;width:71px">Course</div>
<div class="t th" style="left:435.3px;top:31.5px;width:71px">ID</div>
<svg class="ic" style="left:498px;top:25px" width="14" height="14" viewBox="0 0 14 14" fill="#c6c6c6"><path d="M.3.300h13.400c.3 0 .4.300.2.500L8.700 6.300v6.900c0 .3-.3.500-.6.300L5.600 11.800c-.2-.1-.3-.3-.3-.5v-5L.1.800C-.1.600 0 .3.300.3z"/></svg>
<div class="t th" style="left:520.3px;top:11.5px;width:98px">Course</div>
<div class="t th" style="left:520.3px;top:31.5px;width:98px">Title</div>
<svg class="ic" style="left:610px;top:25px" width="14" height="14" viewBox="0 0 14 14" fill="#c6c6c6"><path d="M.3.300h13.400c.3 0 .4.300.2.500L8.700 6.300v6.900c0 .3-.3.500-.6.300L5.600 11.800c-.2-.1-.3-.3-.3-.5v-5L.1.800C-.1.600 0 .3.300.3z"/></svg>
<div class="t th" style="left:632px;top:21.5px;width:125px">Staff Name</div>
<svg class="ic" style="left:749px;top:25px" width="14" height="14" viewBox="0 0 14 14" fill="#c6c6c6"><path d="M.3.300h13.400c.3 0 .4.300.2.500L8.700 6.300v6.900c0 .3-.3.500-.6.300L5.600 11.800c-.2-.1-.3-.3-.3-.5v-5L.1.800C-.1.600 0 .3.300.3z"/></svg>
<div class="t th" style="left:771px;top:11.5px;width:79px">Room</div>
<div class="t th" style="left:771px;top:31.5px;width:79px">Name</div>
<svg class="ic" style="left:842px;top:25px" width="14" height="14" viewBox="0 0 14 14" fill="#c6c6c6"><path d="M.3.300h13.400c.3 0 .4.300.2.500L8.700 6.300v6.900c0 .3-.3.500-.6.300L5.600 11.800c-.2-.1-.3-.3-.3-.5v-5L.1.800C-.1.600 0 .3.300.3z"/></svg>
<div class="t th" style="left:860px;top:5.8px;width:133px">Grades</div>
<div class="t th" style="left:864px;top:37.0px;width:51px">Low</div>
<svg class="ic" style="left:907px;top:40px" width="14" height="14" viewBox="0 0 14 14" fill="#c6c6c6"><path d="M.3.300h13.400c.3 0 .4.300.2.500L8.700 6.300v6.900c0 .3-.3.500-.6.300L5.600 11.800c-.2-.1-.3-.3-.3-.5v-5L.1.800C-.1.600 0 .3.300.3z"/></svg>
<div class="t th" style="left:929px;top:37.0px;width:54px">High</div>
<svg class="ic" style="left:975px;top:40px" width="14" height="14" viewBox="0 0 14 14" fill="#c6c6c6"><path d="M.3.300h13.400c.3 0 .4.300.2.500L8.700 6.300v6.900c0 .3-.3.500-.6.300L5.600 11.800c-.2-.1-.3-.3-.3-.5v-5L.1.800C-.1.600 0 .3.300.3z"/></svg>
<div class="t th" style="left:997px;top:21.5px;width:135px">Enter Date</div>
<svg class="ic" style="left:1124px;top:25px" width="14" height="14" viewBox="0 0 14 14" fill="#c6c6c6"><path d="M.3.300h13.400c.3 0 .4.300.2.500L8.700 6.300v6.900c0 .3-.3.500-.6.300L5.600 11.800c-.2-.1-.3-.3-.3-.5v-5L.1.800C-.1.600 0 .3.300.3z"/></svg>
<div class="t th" style="left:1146px;top:21.5px;width:135px">Leave Date</div>
<svg class="ic" style="left:1273px;top:25px" width="14" height="14" viewBox="0 0 14 14" fill="#c6c6c6"><path d="M.3.300h13.400c.3 0 .4.300.2.500L8.700 6.300v6.900c0 .3-.3.500-.6.300L5.600 11.800c-.2-.1-.3-.3-.3-.5v-5L.1.800C-.1.600 0 .3.300.3z"/></svg>
<div class="t th" style="left:1295px;top:11.5px;width:76px">Teacher</div>
<div class="t th" style="left:1295px;top:31.5px;width:76px">Aide</div>
<svg class="ic" style="left:1363px;top:25px" width="14" height="14" viewBox="0 0 14 14" fill="#c6c6c6"><path d="M.3.300h13.400c.3 0 .4.300.2.500L8.700 6.300v6.900c0 .3-.3.500-.6.300L5.600 11.800c-.2-.1-.3-.3-.3-.5v-5L.1.800C-.1.600 0 .3.300.3z"/></svg>
<svg class="ic" style="left:6px;top:26px" width="12" height="12" viewBox="0 0 12 12" fill="none" stroke="#fff" stroke-width="2.900"><path d="M1.300 1.300l9.400 9.400M10.700 1.300 1.300 10.700"/></svg>
<div class="a cb" style="left:6px;top:76px;border-color:#c8c8c8"></div>
<div class="t th" style="left:24px;top:71px;width:38px;font-weight:normal">1</div>
<div class="t " style="left:129px;top:71px">0</div>
<div class="t " style="left:204px;top:71px">0</div>
<div class="t " style="left:267px;top:71px">FY</div>
<div class="t lk" style="left:348px;top:71px">0043</div>
<div class="t lk" style="left:436px;top:71px">HOME150</div>
<div class="t lk" style="left:521px;top:71px">Homeroom</div>
<div class="t lk" style="left:630px;top:71px;width:4px;overflow:hidden">J</div>
<div class="t " style="left:771px;top:71px">Default Room</div>
<div class="t " style="left:863px;top:71px">7</div>
<div class="t " style="left:928px;top:71px">7</div>
<div class="t dt" style="left:1000px;top:71px">09/21/2021</div>
<svg class="ic" style="left:1099px;top:74px" width="13" height="14" viewBox="0 0 13 14" fill="#555"><path d="M2.400 0h1.400v2.600H2.400zM9.200 0h1.400v2.600H9.200z"/><path d="M0 1.600h13V4.600H0z"/><path d="M0 5.200h13V14H0zM1 6.200v1.700h1.700V6.200zM3.500 6.200v1.700h1.700V6.200zM6 6.200v1.700h1.700V6.200zM8.500 6.200v1.700h1.700V6.200zM10.900 6.200v1.700H12V6.200zM1 8.700v1.700h1.700V8.700zM3.500 8.700v1.700h1.700V8.700zM6 8.700v1.700h1.700V8.700zM8.500 8.700v1.700h1.700V8.700zM10.900 8.700v1.700H12V8.700zM1 11.200v1.800h1.700v-1.800zM3.500 11.200v1.800h1.700v-1.800zM6 11.200v1.800h1.700v-1.800zM8.500 11.200v1.800h1.700v-1.800zM10.900 11.200v1.800H12v-1.800z" fill-rule="evenodd"/></svg>
<svg class="ic" style="left:1248px;top:74px" width="13" height="14" viewBox="0 0 13 14" fill="#555"><path d="M2.400 0h1.400v2.600H2.400zM9.200 0h1.400v2.600H9.200z"/><path d="M0 1.600h13V4.600H0z"/><path d="M0 5.200h13V14H0zM1 6.200v1.700h1.700V6.200zM3.500 6.200v1.700h1.700V6.200zM6 6.200v1.700h1.700V6.200zM8.500 6.200v1.700h1.700V6.200zM10.900 6.200v1.700H12V6.200zM1 8.700v1.700h1.700V8.700zM3.500 8.700v1.700h1.700V8.700zM6 8.700v1.700h1.700V8.700zM8.500 8.700v1.700h1.700V8.700zM10.900 8.700v1.700H12V8.700zM1 11.200v1.800h1.700v-1.800zM3.500 11.200v1.800h1.700v-1.800zM6 11.200v1.800h1.700v-1.800zM8.500 11.200v1.800h1.700v-1.800zM10.900 11.200v1.800H12v-1.800z" fill-rule="evenodd"/></svg>
<div class="a cb" style="left:1320px;top:73px"></div>
<div class="t " style="left:1384px;top:71px">24</div>
<div class="a cb" style="left:6px;top:109px;border-color:#c8c8c8"></div>
<div class="t th" style="left:24px;top:104px;width:38px;font-weight:normal">2</div>
<div class="t " style="left:129px;top:104px">1</div>
<div class="t " style="left:204px;top:104px">1</div>
<div class="t " style="left:267px;top:104px">FY</div>
<div class="t lk" style="left:348px;top:104px">0089</div>
<div class="t lk" style="left:436px;top:104px">STSK150</div>
<div class="t lk" style="left:521px;top:104px">Study Skills</div>
<div class="t lk" style="left:630px;top:104px;width:4px;overflow:hidden">J</div>
<div class="t " style="left:771px;top:104px">Default Room</div>
<div class="t " style="left:863px;top:104px">7</div>
<div class="t " style="left:928px;top:104px">7</div>
<div class="t dt" style="left:1000px;top:104px">09/07/2021</div>
<svg class="ic" style="left:1099px;top:107px" width="13" height="14" viewBox="0 0 13 14" fill="#555"><path d="M2.400 0h1.400v2.600H2.400zM9.200 0h1.400v2.600H9.200z"/><path d="M0 1.600h13V4.600H0z"/><path d="M0 5.200h13V14H0zM1 6.200v1.700h1.700V6.200zM3.500 6.200v1.700h1.700V6.200zM6 6.200v1.700h1.700V6.200zM8.500 6.200v1.700h1.700V6.200zM10.900 6.200v1.700H12V6.200zM1 8.700v1.700h1.700V8.700zM3.500 8.700v1.700h1.700V8.700zM6 8.700v1.700h1.700V8.700zM8.500 8.700v1.700h1.700V8.700zM10.900 8.700v1.700H12V8.700zM1 11.200v1.800h1.700v-1.800zM3.500 11.200v1.800h1.700v-1.800zM6 11.200v1.800h1.700v-1.800zM8.500 11.200v1.800h1.700v-1.800zM10.900 11.200v1.800H12v-1.800z" fill-rule="evenodd"/></svg>
<svg class="ic" style="left:1248px;top:107px" width="13" height="14" viewBox="0 0 13 14" fill="#555"><path d="M2.400 0h1.400v2.600H2.400zM9.200 0h1.400v2.600H9.200z"/><path d="M0 1.600h13V4.600H0z"/><path d="M0 5.200h13V14H0zM1 6.200v1.700h1.700V6.200zM3.500 6.200v1.700h1.700V6.200zM6 6.200v1.700h1.700V6.200zM8.500 6.200v1.700h1.700V6.200zM10.900 6.200v1.700H12V6.200zM1 8.700v1.700h1.700V8.700zM3.500 8.700v1.700h1.700V8.700zM6 8.700v1.700h1.700V8.700zM8.500 8.700v1.700h1.700V8.700zM10.900 8.700v1.700H12V8.700zM1 11.200v1.800h1.700v-1.800zM3.500 11.200v1.800h1.700v-1.800zM6 11.200v1.800h1.700v-1.800zM8.500 11.200v1.800h1.700v-1.800zM10.900 11.200v1.800H12v-1.800z" fill-rule="evenodd"/></svg>
<div class="a cb" style="left:1320px;top:106px"></div>
<div class="t " style="left:1384px;top:104px">21</div>
<div class="a cb" style="left:6px;top:142px;border-color:#c8c8c8"></div>
<div class="t th" style="left:24px;top:137px;width:38px;font-weight:normal">3</div>
<div class="t " style="left:129px;top:137px">2</div>
<div class="t " style="left:204px;top:137px">2</div>
<div class="t " style="left:267px;top:137px">FY</div>
<div class="t lk" style="left:348px;top:137px">0111</div>
<div class="t lk" style="left:436px;top:137px">LANG057</div>
<div class="t lk" style="left:521px;top:137px">Language Arts 7</div>
<div class="t lk" style="left:630px;top:137px;width:4px;overflow:hidden">J</div>
<div class="t " style="left:771px;top:137px">Default Room</div>
<div class="t " style="left:863px;top:137px">7</div>
<div class="t " style="left:928px;top:137px">7</div>
<div class="t dt" style="left:1000px;top:137px">09/07/2021</div>
<svg class="ic" style="left:1099px;top:140px" width="13" height="14" viewBox="0 0 13 14" fill="#555"><path d="M2.400 0h1.400v2.600H2.400zM9.200 0h1.400v2.600H9.200z"/><path d="M0 1.600h13V4.600H0z"/><path d="M0 5.200h13V14H0zM1 6.200v1.700h1.700V6.200zM3.500 6.200v1.700h1.700V6.200zM6 6.200v1.700h1.700V6.200zM8.500 6.200v1.700h1.700V6.200zM10.900 6.200v1.700H12V6.200zM1 8.700v1.700h1.700V8.700zM3.500 8.700v1.700h1.700V8.700zM6 8.700v1.700h1.700V8.700zM8.500 8.700v1.700h1.700V8.700zM10.900 8.700v1.700H12V8.700zM1 11.200v1.800h1.700v-1.800zM3.500 11.200v1.800h1.700v-1.800zM6 11.200v1.800h1.700v-1.800zM8.500 11.200v1.800h1.700v-1.800zM10.900 11.200v1.800H12v-1.800z" fill-rule="evenodd"/></svg>
<svg class="ic" style="left:1248px;top:140px" width="13" height="14" viewBox="0 0 13 14" fill="#555"><path d="M2.400 0h1.400v2.600H2.400zM9.200 0h1.400v2.600H9.200z"/><path d="M0 1.600h13V4.600H0z"/><path d="M0 5.200h13V14H0zM1 6.200v1.700h1.700V6.200zM3.500 6.200v1.700h1.700V6.200zM6 6.200v1.700h1.700V6.200zM8.500 6.200v1.700h1.700V6.200zM10.900 6.200v1.700H12V6.200zM1 8.700v1.700h1.700V8.700zM3.500 8.700v1.700h1.700V8.700zM6 8.700v1.700h1.700V8.700zM8.500 8.700v1.700h1.700V8.700zM10.900 8.700v1.700H12V8.700zM1 11.200v1.800h1.700v-1.800zM3.500 11.200v1.800h1.700v-1.800zM6 11.200v1.800h1.700v-1.800zM8.500 11.200v1.800h1.700v-1.800zM10.900 11.200v1.800H12v-1.800z" fill-rule="evenodd"/></svg>
<div class="a cb" style="left:1320px;top:139px"></div>
<div class="t " style="left:1384px;top:137px">20</div>
<div class="a cb" style="left:6px;top:175px;border-color:#c8c8c8"></div>
<div class="t th" style="left:24px;top:170px;width:38px;font-weight:normal">4</div>
<div class="t " style="left:129px;top:170px">3</div>
<div class="t " style="left:204px;top:170px">3</div>
<div class="t " style="left:267px;top:170px">FY</div>
<div class="t lk" style="left:348px;top:170px">0108</div>
<div class="t lk" style="left:436px;top:170px">SOCS057</div>
<div class="t lk" style="left:521px;top:170px">Social Studies 7</div>
<div class="t lk" style="left:630px;top:170px;width:4px;overflow:hidden">C</div>
<div class="t " style="left:771px;top:170px">Default Room</div>
<div class="t " style="left:863px;top:170px">7</div>
<div class="t " style="left:928px;top:170px">7</div>
<div class="t dt" style="left:1000px;top:170px">09/07/2021</div>
<svg class="ic" style="left:1099px;top:173px" width="13" height="14" viewBox="0 0 13 14" fill="#555"><path d="M2.400 0h1.400v2.600H2.400zM9.200 0h1.400v2.600H9.200z"/><path d="M0 1.600h13V4.600H0z"/><path d="M0 5.200h13V14H0zM1 6.200v1.700h1.700V6.200zM3.500 6.200v1.700h1.700V6.200zM6 6.200v1.700h1.700V6.200zM8.500 6.200v1.700h1.700V6.200zM10.900 6.200v1.700H12V6.200zM1 8.700v1.700h1.700V8.700zM3.500 8.700v1.700h1.700V8.700zM6 8.700v1.700h1.700V8.700zM8.500 8.700v1.700h1.700V8.700zM10.900 8.700v1.700H12V8.700zM1 11.200v1.800h1.700v-1.800zM3.500 11.200v1.800h1.700v-1.800zM6 11.200v1.800h1.700v-1.800zM8.500 11.200v1.800h1.700v-1.800zM10.900 11.200v1.800H12v-1.800z" fill-rule="evenodd"/></svg>
<svg class="ic" style="left:1248px;top:173px" width="13" height="14" viewBox="0 0 13 14" fill="#555"><path d="M2.400 0h1.400v2.600H2.400zM9.200 0h1.400v2.600H9.200z"/><path d="M0 1.600h13V4.600H0z"/><path d="M0 5.200h13V14H0zM1 6.200v1.700h1.700V6.200zM3.500 6.200v1.700h1.700V6.200zM6 6.200v1.700h1.700V6.200zM8.500 6.200v1.700h1.700V6.200zM10.900 6.200v1.700H12V6.200zM1 8.700v1.700h1.700V8.700zM3.500 8.700v1.700h1.700V8.700zM6 8.700v1.700h1.700V8.700zM8.500 8.700v1.700h1.700V8.700zM10.900 8.700v1.700H12V8.700zM1 11.200v1.800h1.700v-1.800zM3.500 11.200v1.800h1.700v-1.800zM6 11.200v1.800h1.700v-1.800zM8.500 11.200v1.800h1.700v-1.800zM10.900 11.200v1.800H12v-1.800z" fill-rule="evenodd"/></svg>
<div class="a cb" style="left:1320px;top:172px"></div>
<div class="t " style="left:1384px;top:170px">20</div>
<div class="a cb" style="left:6px;top:208px;border-color:#c8c8c8"></div>
<div class="t th" style="left:24px;top:203px;width:38px;font-weight:normal">5</div>
<div class="t " style="left:129px;top:203px">4</div>
<div class="t " style="left:204px;top:203px">4</div>
<div class="t " style="left:267px;top:203px">FY</div>
<div class="t lk" style="left:348px;top:203px">0104</div>
<div class="t lk" style="left:436px;top:203px">MATH057</div>
<div class="t lk" style="left:521px;top:203px">Math 7</div>
<div class="t lk" style="left:630px;top:203px;width:4px;overflow:hidden">W</div>
<div class="t " style="left:771px;top:203px">Default Room</div>
<div class="t " style="left:863px;top:203px">7</div>
<div class="t " style="left:928px;top:203px">7</div>
<div class="t dt" style="left:1000px;top:203px">09/07/2021</div>
<svg class="ic" style="left:1099px;top:206px" width="13" height="14" viewBox="0 0 13 14" fill="#555"><path d="M2.400 0h1.400v2.600H2.400zM9.200 0h1.400v2.600H9.200z"/><path d="M0 1.600h13V4.600H0z"/><path d="M0 5.200h13V14H0zM1 6.200v1.700h1.700V6.200zM3.500 6.200v1.700h1.700V6.200zM6 6.200v1.700h1.700V6.200zM8.500 6.200v1.700h1.700V6.200zM10.900 6.200v1.700H12V6.200zM1 8.700v1.700h1.700V8.700zM3.500 8.700v1.700h1.700V8.700zM6 8.700v1.700h1.700V8.700zM8.500 8.700v1.700h1.700V8.700zM10.900 8.700v1.700H12V8.700zM1 11.200v1.800h1.700v-1.800zM3.500 11.200v1.800h1.700v-1.800zM6 11.200v1.800h1.700v-1.800zM8.500 11.200v1.800h1.700v-1.800zM10.900 11.200v1.800H12v-1.800z" fill-rule="evenodd"/></svg>
<svg class="ic" style="left:1248px;top:206px" width="13" height="14" viewBox="0 0 13 14" fill="#555"><path d="M2.400 0h1.400v2.600H2.400zM9.200 0h1.400v2.600H9.200z"/><path d="M0 1.600h13V4.600H0z"/><path d="M0 5.200h13V14H0zM1 6.200v1.700h1.700V6.200zM3.500 6.200v1.700h1.700V6.200zM6 6.200v1.700h1.700V6.200zM8.500 6.200v1.700h1.700V6.200zM10.900 6.200v1.700H12V6.200zM1 8.700v1.700h1.700V8.700zM3.500 8.700v1.700h1.700V8.700zM6 8.700v1.700h1.700V8.700zM8.500 8.700v1.700h1.700V8.700zM10.900 8.700v1.700H12V8.700zM1 11.200v1.800h1.700v-1.800zM3.500 11.200v1.800h1.700v-1.800zM6 11.200v1.800h1.700v-1.800zM8.500 11.200v1.800h1.700v-1.800zM10.900 11.200v1.800H12v-1.800z" fill-rule="evenodd"/></svg>
<div class="a cb" style="left:1320px;top:205px"></div>
<div class="t " style="left:1384px;top:203px">20</div>
<div class="a cb" style="left:6px;top:241px;border-color:#c8c8c8"></div>
<div class="t th" style="left:24px;top:236px;width:38px;font-weight:normal">6</div>
<div class="t " style="left:129px;top:236px">5</div>
<div class="t " style="left:204px;top:236px">5</div>
<div class="t " style="left:267px;top:236px">FY</div>
<div class="t lk" style="left:348px;top:236px">0118</div>
<div class="t lk" style="left:436px;top:236px">SCIE057</div>
<div class="t lk" style="left:521px;top:236px">Science 7</div>
<div class="t lk" style="left:630px;top:236px;width:4px;overflow:hidden">F</div>
<div class="t " style="left:771px;top:236px">Default Room</div>
<div class="t " style="left:863px;top:236px">7</div>
<div class="t " style="left:928px;top:236px">7</div>
<div class="t dt" style="left:1000px;top:236px">09/07/2021</div>
<svg class="ic" style="left:1099px;top:239px" width="13" height="14" viewBox="0 0 13 14" fill="#555"><path d="M2.400 0h1.400v2.600H2.400zM9.200 0h1.400v2.600H9.200z"/><path d="M0 1.600h13V4.600H0z"/><path d="M0 5.200h13V14H0zM1 6.200v1.700h1.700V6.200zM3.500 6.200v1.700h1.700V6.200zM6 6.200v1.700h1.700V6.200zM8.500 6.200v1.700h1.700V6.200zM10.900 6.200v1.700H12V6.200zM1 8.700v1.700h1.700V8.700zM3.500 8.700v1.700h1.700V8.700zM6 8.700v1.700h1.700V8.700zM8.500 8.700v1.700h1.700V8.700zM10.900 8.700v1.700H12V8.700zM1 11.200v1.800h1.700v-1.800zM3.500 11.200v1.800h1.700v-1.800zM6 11.200v1.800h1.700v-1.800zM8.500 11.200v1.800h1.700v-1.800zM10.900 11.200v1.800H12v-1.800z" fill-rule="evenodd"/></svg>
<svg class="ic" style="left:1248px;top:239px" width="13" height="14" viewBox="0 0 13 14" fill="#555"><path d="M2.400 0h1.400v2.600H2.400zM9.200 0h1.400v2.600H9.200z"/><path d="M0 1.600h13V4.600H0z"/><path d="M0 5.200h13V14H0zM1 6.200v1.700h1.700V6.200zM3.500 6.200v1.700h1.700V6.200zM6 6.200v1.700h1.700V6.200zM8.500 6.200v1.700h1.700V6.200zM10.900 6.200v1.700H12V6.200zM1 8.700v1.700h1.700V8.700zM3.500 8.700v1.700h1.700V8.700zM6 8.700v1.700h1.700V8.700zM8.500 8.700v1.700h1.700V8.700zM10.900 8.700v1.700H12V8.700zM1 11.200v1.800h1.700v-1.800zM3.500 11.200v1.800h1.700v-1.800zM6 11.200v1.800h1.700v-1.800zM8.500 11.200v1.800h1.700v-1.800zM10.900 11.200v1.800H12v-1.800z" fill-rule="evenodd"/></svg>
<div class="a cb" style="left:1320px;top:238px"></div>
<div class="t " style="left:1384px;top:236px">20</div>
</div>
<div class="a" style="left:681px;top:575px;width:127px;height:197px;background:#fff"></div>
<!--CUR1-->

<!--LEG0--><!-- legend -->
<div class="t" style="left:45px;top:799px;font-weight:bold;color:#333">Info Legend</div>
<div class="t" style="left:45px;top:819px;color:#333">R</div>
<div class="t" style="left:65px;top:819px;color:#333">- Student has taken course</div>
<div class="t" style="left:45px;top:839px;color:#333">E</div>
<div class="t" style="left:65px;top:839px;color:#333">- Student has taken equivalent course</div>
<!-- scrollbars -->
<div class="a" style="left:1443px;top:334px;width:13px;height:520px;background:#fafafa;border-left:1px solid #e8e8e8"></div>
<div class="a" style="left:1447px;top:337px;width:7px;height:343px;background:#c1c1c1;border-radius:4px"></div>
<div class="a" style="left:35px;top:854px;width:1421px;height:14px;background:linear-gradient(180deg,#f9f9f9,#efefef);border-top:1px solid #e8e8e8"></div>
<div class="a" style="left:39px;top:858px;width:1009px;height:8px;background:#c1c1c1;border-radius:4px"></div>
<div class="a" style="left:1455px;top:436px;width:1px;height:111px;background:#9ad08a"></div>
<svg class="ic" style="left:1451px;top:863px" width="5" height="5" viewBox="0 0 10 10"><path d="M10 0v10H0C6 9 9 6 10 0z" fill="#14262c"/></svg>
<!--LEG1-->

<!-- orange highlight frames -->
<div class="a" style="left:31px;top:45px;width:141px;height:42px;border:10px solid #f09a36;border-right-width:10px"></div>
<div class="a" style="left:754px;top:173px;width:99px;height:43px;border:10px solid #f09a36"></div>

</body>
</html>
